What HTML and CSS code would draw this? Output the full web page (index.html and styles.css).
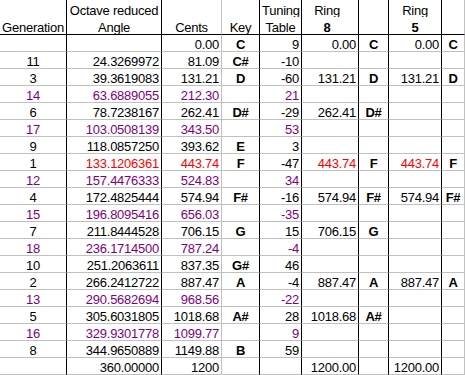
FILE: index.html
```html
<!DOCTYPE html>
<html>
<head>
<meta charset="utf-8">
<link rel="stylesheet" href="styles.css">
</head>
<body>
<div class="sheet">
  <div class="row head1">
    <div></div><div class="c">Octave reduced</div><div></div><div></div><div class="c">Tuning</div><div class="c ring8">Ring</div><div></div><div class="c">Ring</div><div></div>
  </div>
  <div class="row head2">
    <div class="c">Generation</div><div class="c">Angle</div><div class="c">Cents</div><div class="c">Key</div><div class="c">Table</div><div class="c b ring8">8</div><div></div><div class="c b">5</div><div></div>
  </div>
  <div class="row"><div class="c"></div><div class="r"></div><div class="r">0.00</div><div class="c b">C</div><div class="r">9</div><div class="r">0.00</div><div class="c b">C</div><div class="r">0.00</div><div class="c b">C</div></div>
  <div class="row"><div class="c">11</div><div class="r">24.3269972</div><div class="r">81.09</div><div class="c b">C#</div><div class="r">-10</div><div class="r"></div><div class="c b"></div><div class="r"></div><div class="c b"></div></div>
  <div class="row"><div class="c">3</div><div class="r">39.3619083</div><div class="r">131.21</div><div class="c b">D</div><div class="r">-60</div><div class="r">131.21</div><div class="c b">D</div><div class="r">131.21</div><div class="c b">D</div></div>
  <div class="row p"><div class="c">14</div><div class="r">63.6889055</div><div class="r">212.30</div><div class="c b"></div><div class="r">21</div><div class="r"></div><div class="c b"></div><div class="r"></div><div class="c b"></div></div>
  <div class="row"><div class="c">6</div><div class="r">78.7238167</div><div class="r">262.41</div><div class="c b">D#</div><div class="r">-29</div><div class="r">262.41</div><div class="c b">D#</div><div class="r"></div><div class="c b"></div></div>
  <div class="row p"><div class="c">17</div><div class="r">103.0508139</div><div class="r">343.50</div><div class="c b"></div><div class="r">53</div><div class="r"></div><div class="c b"></div><div class="r"></div><div class="c b"></div></div>
  <div class="row"><div class="c">9</div><div class="r">118.0857250</div><div class="r">393.62</div><div class="c b">E</div><div class="r">3</div><div class="r"></div><div class="c b"></div><div class="r"></div><div class="c b"></div></div>
  <div class="row"><div class="c">1</div><div class="r red">133.1206361</div><div class="r red">443.74</div><div class="c b">F</div><div class="r">-47</div><div class="r red">443.74</div><div class="c b">F</div><div class="r red">443.74</div><div class="c b">F</div></div>
  <div class="row p"><div class="c">12</div><div class="r">157.4476333</div><div class="r">524.83</div><div class="c b"></div><div class="r">34</div><div class="r"></div><div class="c b"></div><div class="r"></div><div class="c b"></div></div>
  <div class="row"><div class="c">4</div><div class="r">172.4825444</div><div class="r">574.94</div><div class="c b">F#</div><div class="r">-16</div><div class="r">574.94</div><div class="c b">F#</div><div class="r">574.94</div><div class="c b">F#</div></div>
  <div class="row p"><div class="c">15</div><div class="r">196.8095416</div><div class="r">656.03</div><div class="c b"></div><div class="r">-35</div><div class="r"></div><div class="c b"></div><div class="r"></div><div class="c b"></div></div>
  <div class="row"><div class="c">7</div><div class="r">211.8444528</div><div class="r">706.15</div><div class="c b">G</div><div class="r">15</div><div class="r">706.15</div><div class="c b">G</div><div class="r"></div><div class="c b"></div></div>
  <div class="row p"><div class="c">18</div><div class="r">236.1714500</div><div class="r">787.24</div><div class="c b"></div><div class="r">-4</div><div class="r"></div><div class="c b"></div><div class="r"></div><div class="c b"></div></div>
  <div class="row"><div class="c">10</div><div class="r">251.2063611</div><div class="r">837.35</div><div class="c b">G#</div><div class="r">46</div><div class="r"></div><div class="c b"></div><div class="r"></div><div class="c b"></div></div>
  <div class="row"><div class="c">2</div><div class="r">266.2412722</div><div class="r">887.47</div><div class="c b">A</div><div class="r">-4</div><div class="r">887.47</div><div class="c b">A</div><div class="r">887.47</div><div class="c b">A</div></div>
  <div class="row p"><div class="c">13</div><div class="r">290.5682694</div><div class="r">968.56</div><div class="c b"></div><div class="r">-22</div><div class="r"></div><div class="c b"></div><div class="r"></div><div class="c b"></div></div>
  <div class="row"><div class="c">5</div><div class="r">305.6031805</div><div class="r">1018.68</div><div class="c b">A#</div><div class="r">28</div><div class="r">1018.68</div><div class="c b">A#</div><div class="r"></div><div class="c b"></div></div>
  <div class="row p"><div class="c">16</div><div class="r">329.9301778</div><div class="r">1099.77</div><div class="c b"></div><div class="r">9</div><div class="r"></div><div class="c b"></div><div class="r"></div><div class="c b"></div></div>
  <div class="row"><div class="c">8</div><div class="r">344.9650889</div><div class="r">1149.88</div><div class="c b">B</div><div class="r">59</div><div class="r"></div><div class="c b"></div><div class="r"></div><div class="c b"></div></div>
  <div class="row"><div class="c"></div><div class="r">360.00000</div><div class="r">1200</div><div class="c b"></div><div class="r"></div><div class="r">1200.00</div><div class="c b"></div><div class="r">1200.00</div><div class="c b"></div></div>
</div>
</body>
</html>
```
FILE: styles.css
```css
html, body {
  margin: 0;
  padding: 0;
  background: #ffffff;
}
.sheet {
  width: 465px;
  font-family: "Liberation Sans", Arial, sans-serif;
  font-size: 13px;
  letter-spacing: -0.25px;
  color: #000000;
}
.row {
  display: grid;
  grid-template-columns: 67px 95px 60px 38px 42px 57px 30px 53px 23px;
  height: 17px;
}
.row > div {
  box-sizing: border-box;
  height: 17px;
  border-right: 1px solid #c0c0c0;
  border-bottom: 1px solid #c0c0c0;
  padding: 2px 2px 0 2px;
  line-height: 15px;
  white-space: nowrap;
  overflow: hidden;
}
.row > div:nth-child(1),
.row > div:nth-child(2),
.row > div:nth-child(4),
.row > div:nth-child(5),
.row > div:nth-child(6),
.row > div:nth-child(7),
.row > div:nth-child(8) {
  border-right-color: #000000;
}
.head1 > div {
  border-bottom: none !important;
  padding-top: 3px !important;
}
.head2 {
  height: 18px;
}
.head2 > div {
  height: 18px !important;
  padding-top: 3px !important;
  border-bottom-color: #000000 !important;
}
.c { text-align: center; }
.r { text-align: right; }
.b { font-weight: bold; }
.ring8 { padding-right: 8px !important; }
.p { color: #800080; }
.p > div:nth-child(4) { color: #000000; }
.red { color: #ff0000; }
```
